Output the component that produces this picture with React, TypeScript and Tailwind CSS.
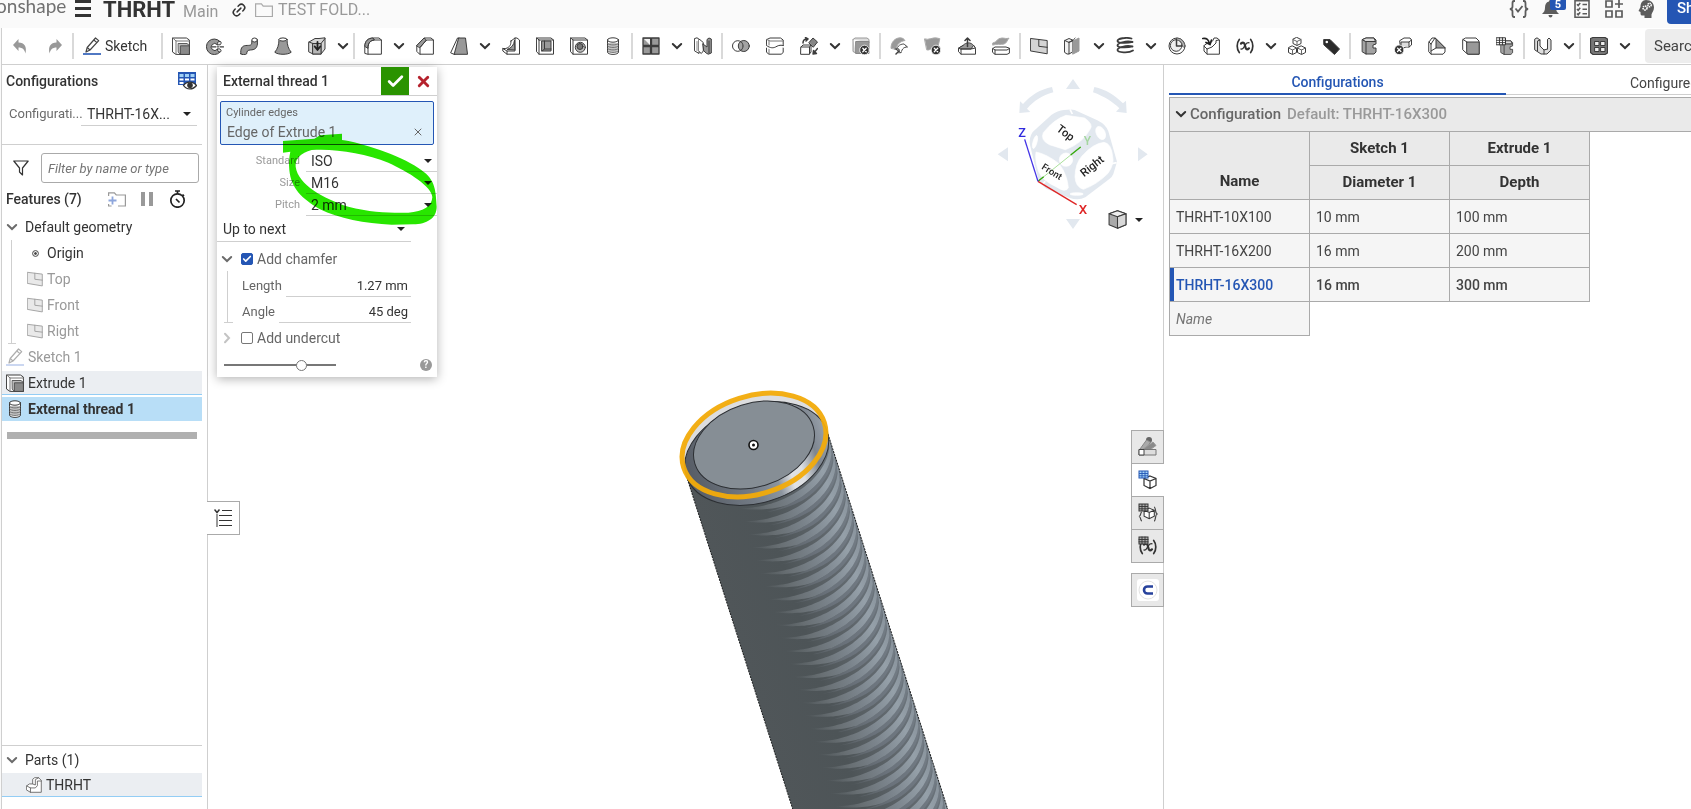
import React, { ReactNode } from "react";
import { Check, X, Link2 } from "lucide-react";

const LINE = "#3c3c3c";
const GREY = "#999999";

function Glyph({ children, size = 18, fill = "white" }: { children: ReactNode; size?: number; fill?: string }) {
  return (
    <svg width={size} height={size} viewBox="0 0 18 18" fill={fill} stroke={LINE} strokeWidth="1" strokeLinejoin="round" strokeLinecap="round" className="shrink-0" aria-hidden="true">
      {children}
    </svg>
  );
}

const plane = (
  <>
    <path d="M.8 1.500l16.400 2v13.300L.8 14z" fill="#d4d4d4" />
    <path d="M8.800 2.500v6.800l8.400 1" fill="none" />
  </>
);
const extrude = (
  <>
    <path d="M.8 1h13.600l3 2v14.400H4L.8 15.200z" />
    <path d="M.8 1L4 4h13.400M4 4v13.400" fill="none" stroke="#777" />
    <path d="M6.500 6.500h8.500l2.400 2v8.900H8.500l-2-2z" fill="#bdbdbd" strokeWidth=".8" />
    <path d="M8.800 8.800h8.600v8.600H8.800z" fill="#8a8a8a" strokeWidth=".8" />
  </>
);
const thread = (
  <>
    <path d="M3.500 3v12c0 1.400 2.500 2.400 5.500 2.400s5.500-1 5.500-2.400V3z" />
    <path d="M4 6v8c2 2 8 2 10 0V6z" fill="#c4c4c4" stroke="none" />
    <ellipse cx="9" cy="3" rx="5.500" ry="2.200" />
    <path d="M3.500 6.500c2 2 9 2 11 0M3.500 9c2 2 9 2 11 0M3.500 11.500c2 2 9 2 11 0M3.500 14c2 2 9 2 11 0" fill="none" stroke="#666" strokeWidth=".9" />
  </>
);
const badX = (cx: number, cy: number) => (
  <>
    <circle cx={cx} cy={cy} r="4.800" fill="#333" stroke="white" strokeWidth=".8" />
    <path d={`M${cx - 1.700} ${cy - 1.700}l3.400 3.400m0-3.400l-3.400 3.400`} stroke="white" strokeWidth="1.300" />
  </>
);
const clamp = (
  <>
    <path d="M2.500 2.500L6 1h8l2 2v4l-3 1v3h3v4l-2 2H6l-3.500-2z" fill="#a3a3a3" />
    <path d="M2.500 2.500L6 4.500h9.500M6 4.500V17" fill="none" />
    <path d="M2.500 2.500L6 1h8l1.500 3.500H6z" fill="#ddd" />
  </>
);
const miniGrid = (x: number, y: number, color: string, bg: string) => (
  <>
    <rect x={x} y={y} width="9" height="7" fill={bg} stroke={color} strokeWidth="1" />
    <path d={`M${x + 3} ${y}v7m3-7v7M${x} ${y + 2.500}h9m-9 2.300h9`} stroke={color} strokeWidth=".9" fill="none" />
  </>
);
const variable = (
  <>
    <path d="M3.300 2.500C.5 6 .5 12 3.300 15.500M14.700 2.500c2.800 3.500 2.800 9.500 0 13" fill="none" stroke="#333" strokeWidth="1.700" />
    <path d="M5 6.500c2-1.500 3.200-.8 3.700 1l1 3.500c.5 1.800 1.800 2 3.300.3" fill="none" stroke="#333" strokeWidth="2.200" />
    <path d="M13 5.800c-1.800-.6-3 .8-4 2.700S6.800 12.500 5 12" fill="none" stroke="#333" strokeWidth="1.300" />
  </>
);

const icons: Record<string, ReactNode> = {
  extrude,
  plane,
  thread,
  variable,
  revolve: (
    <>
      <path d="M14 4.500A7.800 7.800 0 1 0 14 15l-2.600-2.800a3.500 3.500 0 1 1-.2-4.700z" fill={GREY} />
      <path d="M11.200 7.500c0-2 1-3.500 2.800-3 1.500 0 1.500 2 .5 3zM11.400 12.200c0 1.600 1 3 2.600 2.800 1.400-.2 1.500-2 .3-2.800z" fill="#e4e4e4" />
      <path d="M6 9.800h4m1.500 0h1m1.500 0h3.500" strokeWidth="1.200" />
    </>
  ),
  sweep: (
    <>
      <path d="M.8 16.800c-.5-5 1-8 5-8.300 4-.2 5.500.2 6-2.500V3.500h5.600V7c-.4 4.500-3 5.800-7 6-2.500.1-3.600 1-3.700 3.800-1.500 1.200-4.500 1.200-5.900 0z" fill={GREY} />
      <ellipse cx="14.600" cy="3" rx="2.800" ry="2" />
    </>
  ),
  loft: (
    <>
      <path d="M5 2.500C5 8 3.500 12 .8 15.200c3 2.800 13.400 2.800 16.400 0C14.500 12 13 8 13 2.500z" fill={GREY} />
      <ellipse cx="9" cy="2.500" rx="4" ry="1.600" />
    </>
  ),
  thicken: (
    <>
      <path d="M1 5l6-3.500h4l6-.7V12l-4 5H5l-4-2z" fill="#d6d6d6" />
      <path d="M1 5l4 1.500h8l4-5M5 6.500V17M13 6.500V17" fill="none" />
      <path d="M5 6.500h8V17H5z" fill="#b6b6b6" />
      <path d="M9.500 5v7m-2.800-2.500L9.500 13l2.800-3.500" strokeWidth="1.800" fill="none" stroke="#222" />
    </>
  ),
  fillet: (
    <>
      <path d="M.8 16V9C1 4 4 1.200 9 1h6l2.400 2v14.200H4z" />
      <path d="M.8 9C1 4 4 1.200 9 1l1.500 2C6 3.500 4 6 4 11z" fill={GREY} />
      <path d="M4 17.200V11c0-5 2.500-7.700 6.500-8h7" fill="none" />
    </>
  ),
  chamfer: (
    <>
      <path d="M.8 14V8.500L8 1h7l2.400 2v14.200H4z" />
      <path d="M.8 8.500L8 1l2.500 2L4 10.500z" fill={GREY} />
      <path d="M4 17.200v-6.700L10.500 3h7" fill="none" />
    </>
  ),
  draft: (
    <>
      <path d="M.8 15.500L7.500 1h2L5 17.300z" />
      <path d="M9 1h6.500l2 16.300H4.500z" fill={GREY} />
    </>
  ),
  rib: (
    <>
      <path d="M9 4l4-3h2l2.500 2v14.200H5L.8 14v-2.500h3C8 10 9 8 9 4z" />
      <path d="M12.500 3.500C12 8 9.500 11 5 12.500l7.500.5z" fill={GREY} />
      <path d="M13 1v13H5v3.200M.8 11.500L5 14" fill="none" />
    </>
  ),
  shell: (
    <>
      <path d="M.8 1H15l2.500 2v14.200H3L.8 15z" />
      <path d="M3 3h14.500M3 3v14.200M.8 1L3 3" fill="none" />
      <path d="M6 4h9v10H6z" fill={GREY} />
      <path d="M6 14l2.500-2H15M8.500 12V4" fill="none" />
    </>
  ),
  hole: (
    <>
      <path d="M.8 1H15l2.500 2v14.200H3L.8 15z" />
      <path d="M.8 1L3 3h14.500M3 3v14.200" fill="none" />
      <circle cx="10.300" cy="10.300" r="5" fill="#bbb" />
      <circle cx="10" cy="9.500" r="3" fill="#777" />
    </>
  ),
  pattern: (
    <>
      <path d="M1 1h7.500v7.500H1zM9.500 1H17v7.500H9.500zM1 9.500h7.500V17H1zM9.500 9.500H17V17H9.500z" fill={GREY} strokeWidth="1.300" />
      <path d="M2 2h6v6z" fill="#f1f1f1" stroke="none" />
    </>
  ),
  mirror: (
    <>
      <path d="M.8 1.500L3 .8l4.500 3 1.800 2V14l-2 2.500L5 14.500v2L.8 14z" />
      <path d="M9 7l4 3V2.500l2-1.500 2.300 1v14l-3 1.200-2-1L10 14z" fill={GREY} />
      <path d="M4.500 2v12M3 4.500v9" fill="none" stroke="#888" />
      <path d="M15 4v12" stroke="#333" />
    </>
  ),
  boolean: (
    <>
      <circle cx="5.800" cy="9" r="5.300" />
      <circle cx="11.800" cy="9" r="5.500" fill={GREY} fillOpacity=".9" />
      <path d="M8.800 4.500a5.400 5.400 0 0 1 0 9" fill="none" />
    </>
  ),
  split: (
    <>
      <path d="M.8 2.500L4 1h10.500l2.700 2v12.500l-2 1.700H3L.8 15.500z" />
      <path d="M.8 2.500L4 4h13M3 4v4m0 3v6" fill="none" stroke="#777" />
      <path d="M0 9c4 3 7 2.500 9 1.500s5-2.500 9-1" fill="none" stroke="white" strokeWidth="2.600" />
      <path d="M.5 8.500c4 3 7 2.500 9 1.500s4-2.500 8-1.500" fill="none" />
    </>
  ),
  transform: (
    <>
      <path d="M1 10l2-2h8l-1.500 2v7.300H1z" />
      <path d="M1 10h8.500M9.500 17l1.500-2V8" fill="none" />
      <path d="M9 5.500L13 1l4.500 4-4 5z" fill="#858585" />
      <path d="M3 6c0-3 1.500-4 4-4M5.500.5L8 2 6 4" fill="none" strokeWidth="1.500" />
      <path d="M17.500 11.500l-4 5m0-3l-.5 3.500 3.500-.5z" fill="#222" strokeWidth="1.400" />
    </>
  ),
  deletePart: (
    <>
      <path d="M1 2.500L3 1h12l2 1.500v3M1 2.500v12L4 16" fill="#ddd" stroke="#999" />
      <path d="M4 4.500h13v12H4z" fill={GREY} stroke="#888" />
      {badX(12.500, 13)}
    </>
  ),
  modifyFillet: (
    <>
      <path d="M1 11C1 5 5 1 10 .8c2.500 0 4 1.200 5 2.700C9.500 4.500 7 7.500 6 12z" fill={GREY} stroke="#aaa" />
      <path d="M6.500 13c1-4 3.500-6 7.500-6l3.500 3c-4 0-5.500 2-6.500 6z" strokeDasharray="2 1" />
      <path d="M6 17l3-3" strokeWidth="1.500" />
      <path d="M5 12h4v4" fill="none" />
    </>
  ),
  deleteFace: (
    <>
      <path d="M.8 2c4 1.500 8-2 12-1l3 .7-2 9C9 10 5 14 3 13z" fill={GREY} stroke="#aaa" />
      {badX(12, 13)}
    </>
  ),
  moveFace: (
    <>
      <path d="M.8 11L5 8.500h11l1.500 3v5.700H3L.8 15z" />
      <path d="M.8 11L5 8.500C8 5 13 5 15.500 8.500L13 12H3z" fill={GREY} />
      <path d="M3 12h10l4.500-1M3 12v5" fill="none" />
      <path d="M9.500 9.500V1M7 3.500L9.500 1 12 3.500" fill="none" strokeWidth="1.500" />
    </>
  ),
  replaceFace: (
    <>
      <path d="M1 6c4-.5 4-5 9-5 2.500 0 4 1 7 .2C15 3 15 6 12 7S4 6.500 1 8z" fill={GREY} stroke="#aaa" />
      <path d="M.8 11.500L3 10h11l3.400 1.200v5L15 17.300H3L.8 15.500z" />
      <path d="M.8 11.500L3 13h12l2.400-1.500M3 13v4" fill="none" />
    </>
  ),
  surface: (
    <>
      <path d="M.8 3.500L5 1.500 8.500 3v12L5 17H3L.8 15.500z" fill="#f2f2f2" />
      <path d="M5 5.500v11.300M.8 3.500L5 5.500 8.500 3" fill="none" />
      <path d="M9 4l6-3v13l-6 3z" fill={GREY} stroke="#999" />
      <path d="M5 5c4 0 4-2 6-4" fill="none" />
    </>
  ),
  helix: (
    <path d="M15.500 1.500C10 0 1.500 1.500 1.500 4s11 2 15 1M16.500 5C10 3.500 1.500 6 1.500 8.500s11 2 15 1M16.500 9.500C10 8 1.500 10.500 1.500 13s11 3.500 15.500.5" fill="none" strokeWidth="1.800" />
  ),
  mate: (
    <>
      <circle cx="9" cy="9" r="8" />
      <circle cx="8.200" cy="8.500" r="5.800" fill="#eee" />
      <path d="M8.500 2.500V9H14" fill="none" strokeWidth="1.500" />
      <path d="M9 1a8 8 0 0 1 7.500 10l-2-2A6 6 0 0 0 9 2.800z" fill="#bbb" strokeWidth=".6" />
    </>
  ),
  derive: (
    <>
      <path d="M6 6c3 0 5-1.500 6-5h3l2.400 2v14.200H5L2 14V9z" />
      <path d="M5 17V12l5-2 4-4V3.500l3-.5M2 9l3 3" fill="none" />
      <path d="M.8 1.500c4-.5 6 1 6.500 5M4 5.500l4 2L9.500 3" fill="none" stroke="#222" strokeWidth="1.700" />
    </>
  ),
  composite: (
    <>
      <path d="M9 .5l4 2v4l-4 2-4-2v-4zM4.500 9l4 2v4.500l-4 2-4-2V11zM13.500 9l4 2v4.500l-4 2-4-2V11z" />
      <path d="M5 2.500l4 2 4-2M9 4.500v4M.5 11l4 2 4-2M4.500 13v4.500M9.500 11l4 2 4-2M13.500 13v4.500" fill="none" stroke="#666" />
    </>
  ),
  tag: (
    <>
      <path d="M2 2.500h6L17.500 12l-5 5.500L2 8z" fill="#2b2b2b" />
      <circle cx="4.800" cy="5" r="1.300" stroke="none" />
    </>
  ),
  clamp,
  sheetDelete: (
    <>
      <path d="M6 3.500L10 1h6l1.500 2v5L15 10h-3L7 12z" />
      <path d="M7 9V5h8v5M15 5l2.500-2" fill="#ddd" />
      {badX(5.200, 12.800)}
    </>
  ),
  flange: (
    <>
      <path d="M1 5l3-4h3l10 10v4l-2 2.200H3L1 15z" />
      <path d="M8 2v9h9z" fill="#999" />
      <path d="M3 7v10M3 7l4-6M8 11l-5 3M1 5l2 2" fill="none" />
    </>
  ),
  cube: (
    <>
      <path d="M1 2.500L3.500 1H14l3 3v13.200H5.500L1 13z" />
      <path d="M5 5h12.200v12.200H6.500L5 16z" fill={GREY} />
      <path d="M1 2.500L5 5" fill="none" />
    </>
  ),
  sheetTable: (
    <>
      <g transform="translate(3 3) scale(.85)">{clamp}</g>
      {miniGrid(0.500, 0.800, "#333", "white")}
    </>
  ),
  frame: (
    <>
      <path d="M1 2l2-1.200L6 3v6l4 4 3.500-1V2.500L15 1l2 2v10l-4 4H7l-6-4z" fill="#ddd" />
      <path d="M6 3L3.500 4v10M10 13v4M13.500 3v9" fill="none" />
    </>
  ),
  windowGrid: (
    <>
      <path d="M.5 1.500L3 .5h12l2.500 1.500v14L15 17.500H3L.5 15.500z" fill="#777" strokeWidth="1.200" />
      <path d="M5 4.500h4v4H5zM11 4.500h4v4h-4zM5 10.500h4v4H5zM11 10.500h4v4h-4z" fill="#eee" />
    </>
  ),
};

function Chevron({ light = false }: { light?: boolean }) {
  return (
    <svg width="12" height="8" viewBox="0 0 12 8" fill="none" stroke={light ? "#6b6b6b" : "#333"} strokeWidth="2" strokeLinecap="round" className="shrink-0" aria-hidden="true">
      <path d="M1.800 2L6 6l4.200-4" />
    </svg>
  );
}

function Caret() {
  return <span aria-hidden="true" className="pointer-events-none size-0 border-x-4 border-t-4 border-x-transparent border-t-[#222]" />;
}

const tools = "| extrude revolve sweep loft thicken v | fillet v chamfer draft v rib shell hole thread | pattern v mirror | boolean split transform v deletePart | modifyFillet deleteFace moveFace replaceFace | plane surface v helix v mate derive variable v composite tag | clamp sheetDelete flange cube sheetTable | frame v | windowGrid v".split(" ");

function Tools() {
  return (
    <div className="flex h-full shrink-0 items-center">
      {tools.map((name, i) => {
        if (name === "|") return <span key={i} className="mx-px h-[26px] w-[2px] shrink-0 bg-[#d9d9d9]" />;
        if (name === "v")
          return (
            <button key={i} aria-label="More tools" className="flex h-7 w-[18px] items-center justify-center">
              <Chevron />
            </button>
          );
        return (
          <button key={i} aria-label={name} className="flex h-7 w-[34px] items-center justify-center">
            <Glyph>{icons[name]}</Glyph>
          </button>
        );
      })}
    </div>
  );
}

function PencilIcon({ faded = false }: { faded?: boolean }) {
  return (
    <svg width="18" height="18" viewBox="0 0 18 18" fill="white" stroke={faded ? "#999" : "#444"} strokeWidth="1.200" strokeLinejoin="round" aria-hidden="true">
      <path d="M3 15l1.200-4.500L12.500 1l3.200 2.600L7 13z" />
      <path d="M4.200 10.500L7 13M10.800 3l3.200 2.600" />
      <path d="M0 17h18" stroke={faded ? "#aec2ea" : "#2456b4"} strokeWidth="1.600" />
    </svg>
  );
}

function Header() {
  return (
    <header className="flex h-7 shrink-0 items-start justify-between overflow-hidden bg-[#fafafa] text-[#333]">
      <div className="flex h-5 shrink-0 items-center">
        <span className="-ml-1 w-[66px] pb-2 font-[Lato,sans-serif] text-[19px] leading-5 text-[#707070]">onshape</span>
        <button aria-label="Main menu" className="ml-[13px] flex w-4 flex-col gap-1 pb-1">
          <span className="h-[3px] bg-[#333]" />
          <span className="h-[3px] bg-[#333]" />
          <span className="h-[3px] bg-[#333]" />
        </button>
        <h1 className="ml-3 w-20 text-[22px] leading-5 font-bold">THRHT</h1>
        <span className="w-12 pt-1 text-base leading-4 text-[#999]">Main</span>
        <Link2 size={16} strokeWidth={2.200} className="-rotate-45" />
        <svg width="18" height="15" viewBox="0 0 18 15" fill="none" stroke="#aaa" strokeWidth="1.200" className="ml-2" aria-hidden="true">
          <path d="M.6 13.500V.8h5.800l1.800 2.400h9.200v10.300z" />
        </svg>
        <a href="#folder" className="ml-[5px] text-base leading-4 text-[#999]">TEST FOLD...</a>
      </div>
      <div className="flex w-[182px] shrink-0 items-start overflow-hidden text-[#5c5c5c]">
        <button aria-label="Checks" className="mr-[13px] h-[18px] w-5">
          <svg width="20" height="18" viewBox="0 0 20 18" fill="none" stroke="#5c5c5c" strokeWidth="1.800">
            <path d="M6 1H5C3.500 1 3.500 2.500 3.500 3.500v3C3.500 8 2.500 9 .8 9c1.700 0 2.700 1 2.700 2.500v3c0 1 0 2.500 1.500 2.500h1M14 1h1c1.500 0 1.500 1.500 1.500 2.500v3c0 1.500 1 2.500 2.700 2.500-1.700 0-2.700 1-2.700 2.500v3c0 1 0 2.500-1.500 2.500h-1M6.500 8.500L9 11.500 13.500 6" />
          </svg>
        </button>
        <button aria-label="Notifications, 5 new" className="relative mr-[15px] h-[18px] w-[17px]">
          <svg width="17" height="18" viewBox="0 0 17 18" fill="#5c5c5c">
            <path d="M8.500 0c1 0 1.500.7 1.500 1.500 3 .8 4 3 4 6 0 3 .8 4.500 3 6.500H0c2.200-2 3-3.500 3-6.500 0-3 1-5.200 4-6C7 .7 7.500 0 8.500 0zM6.500 15h4c0 1.700-1 2.500-2 2.500s-2-.8-2-2.500z" />
          </svg>
          <span className="absolute top-0 left-2 flex h-[10px] w-4 items-center justify-center rounded-b-[2px] bg-[#2456b4] text-[11px] leading-[10px] font-bold text-white">5</span>
        </button>
        <button aria-label="Tasks" className="mr-[15px] h-[18px] w-4">
          <svg width="16" height="18" viewBox="0 0 16 18" fill="none" stroke="#5c5c5c" strokeWidth="1.600">
            <path d="M1 .8h14v16.400H1zM8.500 4.500H13M8.500 9.200H13M8.500 13.800H13M3 4.200l1.200 1.300 2-2.500M3 9l1.200 1.300 2-2.500M3 13.500l1.200 1.300 2-2.500" />
          </svg>
        </button>
        <button aria-label="Apps" className="mr-[15px] h-[18px] w-[18px]">
          <svg width="18" height="18" viewBox="0 0 18 18" fill="none" stroke="#5c5c5c" strokeWidth="1.700">
            <path d="M1 1h6v6H1zM1 11h6v6H1zM11 11h6v6h-6zM14 0v8M10 4h8" />
          </svg>
        </button>
        <button aria-label="Learning center" className="mr-3 h-[18px] w-[17px]">
          <svg width="17" height="18" viewBox="0 0 17 18" fill="#5c5c5c">
            <path d="M8 0c5 0 8 3 8 7.500 0 3.500-2 5-2.500 7L13.500 18H6.500v-2.500H4c-1.500 0-1.500-1.500-1.500-3.500L.5 11l2-4C2.500 3 4.500 0 8 0z" />
            <circle cx="7" cy="8" r="2" fill="none" stroke="white" strokeWidth="1.600" strokeDasharray="1.500 .6" />
            <circle cx="11.500" cy="5" r="1.700" fill="none" stroke="white" strokeWidth="1.500" strokeDasharray="1.300 .5" />
          </svg>
        </button>
        <button className="h-6 shrink-0 rounded-bl-[4px] bg-[#2456b4] px-[10px] pb-2 text-[15px] leading-4 font-medium text-white">Share</button>
      </div>
    </header>
  );
}

function Toolbar() {
  return (
    <div role="toolbar" aria-label="Feature tools" className="flex h-[37px] shrink-0 items-center overflow-hidden border-b border-[#cfcfcf] bg-white">
      <button aria-label="Undo" className="flex w-[35px] shrink-0 justify-center">
        <svg width="14" height="15" viewBox="0 0 14 15" fill="#999"><path d="M5.500 0v3.500c6 0 8.500 4 7 11-1-4-3-6-7-6V12L0 6z" /></svg>
      </button>
      <button aria-label="Redo" className="flex w-[35px] shrink-0 justify-center">
        <svg width="14" height="15" viewBox="0 0 14 15" fill="#999"><path d="M8.500 0v3.500c-6 0-8.500 4-7 11 1-4 3-6 7-6V12L14 6z" /></svg>
      </button>
      <span className="h-[26px] w-[2px] shrink-0 bg-[#d9d9d9]" />
      <button className="flex w-[86px] shrink-0 items-center gap-1 pl-[9px] text-[14px] text-[#333]">
        <PencilIcon />
        Sketch
      </button>
      <Tools />
      <input aria-label="Search tools" placeholder="Search tools..." className="ml-[11px] h-[34px] w-40 shrink-0 rounded-[4px] bg-[#ededed] px-[9px] text-[15px] text-[#333] placeholder:text-[#444]" />
    </div>
  );
}

function FeaturePanel() {
  const planes = ["Top", "Front", "Right"];
  return (
    <aside className="flex w-[206px] shrink-0 flex-col border-r border-[#cfcfcf] bg-white text-sm text-[#333]">
      <div className="mr-[5px] flex h-20 flex-col border-b border-[#cfcfcf] pt-1 pr-[5px] pl-1">
        <div className="flex h-6 items-center justify-between">
          <h2 className="font-medium">Configurations</h2>
          <button aria-label="Show configuration table">
            <svg width="19" height="19" viewBox="0 0 19 19" fill="none" aria-hidden="true">
              <path d="M0 0h18v13H0z" fill="#2456b4" />
              <path d="M1.500 2h4v3h-4zM7 2h4v3H7zM12.500 2h4v3h-4z" fill="#9fd0f5" />
              <path d="M1.500 6.500h4v2h-4zM7 6.500h4v2H7zM12.500 6.500h4v2h-4zM1.500 10h4v2h-4z" fill="white" />
              <path d="M5.500 13.500c3-4.500 9.500-4.500 13 0-3.500 4.500-10 4.500-13 0z" fill="white" stroke="#333" strokeWidth="1.300" />
              <circle cx="12" cy="13.300" r="2.800" fill="#333" />
            </svg>
          </button>
        </div>
        <div className="mt-[9px] flex items-center">
          <label htmlFor="cfg" className="w-[75px] pl-[3px] text-[13px] text-[#6b6b6b]">Configurati...</label>
          <div className="relative flex h-6 flex-1 items-center border-b border-[#cfcfcf]">
            <select id="cfg" className="w-full appearance-none bg-transparent pl-[6px] text-sm leading-5">
              <option>THRHT-16X...</option>
            </select>
            <span className="absolute right-[6px] flex"><Caret /></span>
          </div>
        </div>
      </div>
      <div className="flex h-[43px] items-center pt-[3px] pr-2 pl-[11px]">
        <svg width="16" height="16" viewBox="0 0 16 16" fill="none" stroke="#333" strokeWidth="1.200" strokeLinejoin="round" aria-hidden="true"><path d="M.8 1h14.400L9.500 8v7L6.500 12V8z" /></svg>
        <input aria-label="Filter features" placeholder="Filter by name or type" className="ml-3 h-[30px] min-w-0 flex-1 rounded-[3px] border border-[#aaa] px-[6px] text-[13px] italic placeholder:text-[#757575]" />
      </div>
      <div className="flex h-[22px] items-center pl-1">
        <h2 className="w-[102px] font-medium">Features (7)</h2>
        <button aria-label="New folder" className="w-[33px]">
          <svg width="18" height="15" viewBox="0 0 18 15" fill="none" stroke="#999" strokeWidth="1.200"><path d="M.6 4V.8h5.800l1.800 2.200h9.200v11H10M.6 12v2h3" /><path d="M4.500 4.500v8M.5 8.500h8" stroke="#8ea6dc" strokeWidth="1.800" /></svg>
        </button>
        <button aria-label="Pause regeneration" className="flex w-7 gap-1"><span className="h-[14px] w-1 bg-[#999]" /><span className="h-[14px] w-1 bg-[#999]" /></button>
        <button aria-label="Rebuild times">
          <svg width="17" height="18" viewBox="0 0 17 18" fill="none" stroke="#222" strokeWidth="1.700"><circle cx="8.500" cy="10.500" r="6.700" /><path d="M6 1h5M8.500 1v3M13.500 4.500l1.500 1.500M7 9l3.500 3.500" /></svg>
        </button>
      </div>
      <ul className="mt-1">
        <li>
          <button className="flex h-[26px] w-full items-center gap-[7px] pl-1"><Chevron light />Default geometry</button>
          <ul className="relative ml-[9px] border-l border-[#cfcfcf]">
            <li className="flex h-[26px] items-center gap-2 pl-5 text-[#333]">
              <svg width="7" height="7" viewBox="0 0 7 7" fill="none" stroke="#444" aria-hidden="true"><circle cx="3.500" cy="3.500" r="2.900" /><circle cx="3.500" cy="3.500" r="1" fill="#444" /></svg>
              Origin
            </li>
            {planes.map((p) => (
              <li key={p} className="flex h-[26px] items-center gap-1 pl-[15px] text-[#999]">
                <span className="opacity-50"><Glyph size={16}>{plane}</Glyph></span>
                {p}
              </li>
            ))}
            <li aria-hidden="true" className="absolute bottom-0 -left-1 h-px w-2 bg-[#cfcfcf]" />
          </ul>
        </li>
        <li className="flex h-[26px] items-center gap-1 pl-1 text-[#999]"><span className="opacity-80"><PencilIcon faded /></span>Sketch 1</li>
        <li className="mr-[5px] mt-px flex h-6 items-center gap-1 border-b border-[#93cdf5] bg-[#ebeef2] pl-1"><Glyph>{extrude}</Glyph>Extrude 1</li>
        <li className="mr-[5px] mt-[2px] flex h-6 items-center gap-1 bg-[#b8def7] pl-1 font-bold"><Glyph>{thread}</Glyph>External thread 1</li>
      </ul>
      <div className="mt-[11px] mr-[10px] ml-[5px] h-[7px] bg-[#b0b0b0]" />
      <div className="mt-auto mr-[5px] h-16 border-t border-[#cfcfcf]">
        <button className="flex h-[27px] w-full items-center gap-[7px] pl-1"><Chevron light />Parts (1)</button>
        <div className="flex h-6 items-center gap-1 border-b border-[#93cdf5] bg-[#ebeef2] pl-6">
          <Glyph size={16}><path d="M.8 10l3-2.200h3.700V2.500L9.700.8h4.500l3 3v13.400H5l-4.200-2.500z" stroke="#666" /><path d="M.8 10L5 12.300h5.500l2.300-2.500V4.500h4.400M5 12.300v5M7.500 7.800l3 1.200V3l3.700-2.200" fill="none" stroke="#666" /></Glyph>
          THRHT
        </div>
      </div>
    </aside>
  );
}

function PropertyRow({ id, label, value }: { id: string; label: string; value: string }) {
  return (
    <div className="flex h-[22px]">
      <label htmlFor={id} className="w-[83px] pt-[3px] text-right text-[11px] leading-4 text-[#999]">{label}</label>
      <div className="relative ml-[6px] flex flex-1 items-center border-b border-[#cfcfcf]">
        <select id={id} className="w-full appearance-none bg-transparent pl-[5px] text-sm leading-5"><option>{value}</option></select>
        <span className="absolute right-[5px] flex"><Caret /></span>
      </div>
    </div>
  );
}

function ThreadDialog() {
  return (
    <section aria-label="External thread" className="absolute top-[2px] left-[9px] w-[220px] bg-white text-sm text-[#333] shadow-[0_2px_10px_rgba(0,0,0,0.3)]">
      <div className="flex h-[29px] items-center border-b border-[#cfcfcf]">
        <h2 className="flex-1 pl-[6px] font-medium">External thread 1</h2>
        <button aria-label="Accept" className="flex h-full w-7 items-center justify-center bg-[#2a9300] text-white"><Check size={19} strokeWidth={3.500} /></button>
        <button aria-label="Cancel" className="flex h-full w-7 items-center justify-center text-[#b5222d]"><X size={17} strokeWidth={4} /></button>
      </div>
      <div className="mx-[3px] mt-[5px] h-11 rounded-[2px] border border-[#2456b4] bg-[#dff0fb] pr-[9px] pl-[5px] text-[#666]">
        <div className="pt-[2px] text-[11px] leading-[18px]">Cylinder edges</div>
        <div className="flex items-center justify-between pl-px leading-5">Edge of Extrude 1<button aria-label="Remove edge"><X size={12} /></button></div>
      </div>
      <div className="mt-[5px]">
        <PropertyRow id="standard" label="Standard" value="ISO" />
        <PropertyRow id="size" label="Size" value="M16" />
        <PropertyRow id="pitch" label="Pitch" value="2 mm" />
      </div>
      <div className="relative mr-[26px] flex h-[26px] items-center border-b border-[#cfcfcf]">
        <select aria-label="End type" className="w-full appearance-none bg-transparent pl-[6px] text-sm leading-5"><option>Up to next</option></select>
        <span className="absolute right-[6px] flex"><Caret /></span>
      </div>
      <div className="flex h-[29px] items-center pt-1 pl-1 text-[#666]">
        <Chevron light />
        <label className="ml-2 flex items-center gap-1">
          <input type="checkbox" defaultChecked className="peer sr-only" />
          <span className="flex size-3 items-center justify-center rounded-[2px] border border-[#2456b4] bg-[#2456b4] text-white"><Check size={10} strokeWidth={4} /></span>
          Add chamfer
        </label>
      </div>
      <div className="relative mr-[26px] ml-[10px] border-l border-[#cfcfcf] pl-[14px] text-[#666]">
        {[["Length", "1.27 mm"], ["Angle", "45 deg"]].map(([label, value]) => (
          <div key={label} className="flex h-[26px] items-end gap-1">
            <label htmlFor={label} className="pb-[3px] text-[13px] leading-4">{label}</label>
            <input id={label} defaultValue={value} className="h-[22px] min-w-0 flex-1 border-b border-[#cfcfcf] pr-[3px] text-right text-[13px] text-[#333]" />
          </div>
        ))}
        <span aria-hidden="true" className="absolute bottom-0 -left-1 h-px w-[9px] bg-[#cfcfcf]" />
      </div>
      <div className="flex h-[30px] items-center pl-1 text-[#666]">
        <span className="-rotate-90 opacity-40"><Chevron light /></span>
        <label className="ml-2 flex items-center gap-1">
          <input type="checkbox" className="size-3 appearance-none rounded-[2px] border border-[#777] bg-white" />
          Add undercut
        </label>
      </div>
      <div className="flex h-6 items-center justify-between pr-[5px] pl-[7px]">
        <input type="range" aria-label="Preview opacity" defaultValue={71} className="h-[2px] w-28 appearance-none bg-[#777] [&::-webkit-slider-thumb]:size-[11px] [&::-webkit-slider-thumb]:appearance-none [&::-webkit-slider-thumb]:rounded-full [&::-webkit-slider-thumb]:border [&::-webkit-slider-thumb]:border-[#777] [&::-webkit-slider-thumb]:bg-white" />
        <button aria-label="Help" className="flex size-3 items-center justify-center rounded-full bg-[#999] text-[10px] leading-none font-bold text-white">?</button>
      </div>
      <svg viewBox="36 21 660 927" className="pointer-events-none absolute top-0 left-0 h-[309px] w-[220px] overflow-visible mix-blend-multiply" aria-hidden="true">
        <path
          fillRule="evenodd"
          fill="#28e600"
          d="M234 243L328 236L345 226L411 221V240C465 247 585 285 640 324C690 355 692 385 695 440C695 475 665 492 625 493L560 494C480 491 400 475 345 448C290 415 258 385 253 330C251 310 252 292 256 275L234 278ZM320 270C287 280 270 295 272 320C280 375 355 415 430 440C500 458 560 459 610 458C655 455 680 440 682 412C682 380 610 335 550 308C480 280 390 265 320 270Z"
        />
      </svg>
    </section>
  );
}

const A = 73.800;
const B = 49;

function arcBand(start: number, offset: number, thickness: number) {
  const us = Array.from({ length: 41 }, (_, i) => start + ((A - start) * i) / 40);
  const low = (u: number) => B * Math.sqrt(Math.max(0, 1 - (u / A) ** 2));
  const top = us.map((u) => `${u.toFixed(1)} ${(offset + low(u)).toFixed(1)}`);
  const bottom = [...us].reverse().map((u) => {
    const t = Math.min(1, (u - start) / 45);
    return `${u.toFixed(1)} ${(offset + low(u) + thickness * t).toFixed(1)}`;
  });
  return `M${top.join("L")}L${bottom.join("L")}Z`;
}

function Rod() {
  const turns = Array.from({ length: 36 }, (_, i) => 12 + i * 13.600);
  return (
    <svg viewBox="208 65 955 744" preserveAspectRatio="xMidYMid slice" className="absolute inset-0 size-full" role="img" aria-label="Threaded rod">
      <defs>
        <linearGradient id="body" gradientUnits="userSpaceOnUse" x1={-A} y1="0" x2={A} y2="0">
          <stop offset="0" stopColor="#505659" />
          <stop offset=".45" stopColor="#4d5457" />
          <stop offset=".75" stopColor="#5e656a" />
          <stop offset="1" stopColor="#6c757d" />
        </linearGradient>
        <linearGradient id="crest" gradientUnits="userSpaceOnUse" x1={-34} y1="0" x2={A} y2="0">
          <stop offset="0" stopColor="#666d71" stopOpacity="0" />
          <stop offset=".25" stopColor="#676e72" />
          <stop offset=".55" stopColor="#7b848c" />
          <stop offset=".85" stopColor="#95a0a9" />
          <stop offset="1" stopColor="#88929b" />
        </linearGradient>
        <linearGradient id="flank" gradientUnits="userSpaceOnUse" x1={-20} y1="0" x2={A} y2="0">
          <stop offset="0" stopColor="#676e75" stopOpacity="0" />
          <stop offset=".5" stopColor="#6a727b" />
          <stop offset="1" stopColor="#737c85" />
        </linearGradient>
        <linearGradient id="bevel" gradientUnits="userSpaceOnUse" x1={-A} y1="0" x2={A} y2="0">
          <stop offset="0" stopColor="#555b64" />
          <stop offset=".4" stopColor="#747c86" />
          <stop offset=".58" stopColor="#8c959f" />
          <stop offset=".68" stopColor="#e0e2e5" />
          <stop offset=".76" stopColor="#dcdfe2" />
          <stop offset=".88" stopColor="#7d858f" />
          <stop offset="1" stopColor="#9aa3ac" />
        </linearGradient>
        <clipPath id="side"><path d={`M${-A} 9A${A} ${B} 0 0 0 ${A} 9V520H${-A}Z`} /></clipPath>
      </defs>
      <g transform="translate(754 445) rotate(-17.700)">
        <ellipse rx={A} ry={B} fill="#dcdddf" />
        <path d={`M${-A} 9V520H${A}V9Z`} fill="url(#body)" />
        <g clipPath="url(#side)">
          {turns.map((v) => (
            <g key={v}>
              <path d={arcBand(-10, v + 7, 4)} fill="url(#flank)" />
              <path d={arcBand(-34, v, 7)} fill="url(#crest)" />
            </g>
          ))}
        </g>
        <path d={`M${-A} 9V520M${A} 9V520`} stroke="#1d1f20" strokeWidth="1" strokeDasharray="2 1" />
        <ellipse cy="9" rx={A} ry={B} fill="url(#bevel)" stroke="#2c2f33" strokeWidth="1" />
        <ellipse rx="62" ry="41.700" fill="#868e95" stroke="#2c2f33" strokeWidth="1" />
        <ellipse rx={A} ry={B} fill="none" stroke="#f2ab0a" strokeWidth="5" strokeOpacity=".95" />
      </g>
      <circle cx="753.500" cy="445" r="4.500" fill="white" stroke="#111" strokeWidth="1.600" />
      <circle cx="753.500" cy="445" r="1.500" fill="#111" />
    </svg>
  );
}

function ViewCube() {
  return (
    <svg width="200" height="190" viewBox="0 0 600 570" className="absolute top-0 right-0 -mt-[5px] mr-[-17px]" role="img" aria-label="View cube">
      <g fill="#e2e8ef">
        <path d="M279 57l21 30h-42zM279 507l21-30h-42zM53 283l31-21v42zM503 283l-29-21v42z" />
        <path d="M216 81l4 16c-34 9-58 26-79 49l10 10-33 3 2-35 9 8c23-26 52-44 87-51zM343 81l-4 16c34 12 62 31 79 48l-10 10 32 4-2-37-9 8c-24-24-52-42-86-49z" />
        <path d="M252 150Q274 147 284 150L352 181Q378 194 385 214L411 305L400 342Q397 350 388 357L316 412Q296 422 269 414L200 387Q182 374 175 358L150 255Q146 234 158 216L214 165Q233 151 252 150Z" />
      </g>
      <g fill="white" stroke="white" strokeWidth="2">
        <path d="M190 218Q222 178 258 166L314 174Q342 194 330 208Q308 250 256 269L208 254Q180 240 190 218Z" />
        <path d="M168 276Q200 282 238 312Q262 345 265 383Q258 400 228 380Q188 362 176 335Q164 300 168 276Z" />
        <path d="M306 288Q340 250 372 247Q394 250 398 290Q404 310 384 340Q350 374 310 388Q286 380 285 350Q286 310 306 288Z" />
        <ellipse cx="362" cy="219" rx="13" ry="21" transform="rotate(-25 362 219)" />
        <ellipse cx="165" cy="246" rx="6" ry="20" transform="rotate(15 165 246)" />
        <ellipse cx="290" cy="402" rx="20" ry="4" />
        <circle cx="258" cy="299" r="20" />
        <path d="M270 148l7 14M390 312l20-4M188 372l8-8" strokeWidth="5" />
      </g>
      <g fill="none" strokeWidth="4">
        <path d="M174 364L302 261" stroke="#a9e09a" strokeWidth="3" />
        <path d="M174 364l17-14M272 285l30-24" stroke="#35a80f" />
        <path d="M174 364L290 434" stroke="#df2626" />
        <path d="M174 364L134 238" stroke="#4434e6" />
      </g>
      <g className="font-[Roboto,sans-serif]" textAnchor="middle">
        <text x="126" y="232" fontSize="38" fontWeight="500" fill="#2f2ade">Z</text>
        <text x="309" y="461" fontSize="40" fontWeight="500" fill="#df2626">X</text>
        <text x="322" y="254" fontSize="36" fontWeight="500" fill="#a5d6a0">Y</text>
        <g fill="#222" fontSize="34" fontWeight="500">
          <text transform="translate(250 228) rotate(37)">Top</text>
          <text transform="translate(343 327) rotate(-38)">Right</text>
          <text transform="translate(211 343) rotate(32)" fontSize="28">Front</text>
        </g>
      </g>
    </svg>
  );
}

const swatches = (
  <>
    <circle cx="11" cy="3" r="3" fill="#666" stroke="none" />
    <path d="M2 12L8.500 3l4 2-5 8z" fill="#aaa" stroke="#888" />
    <path d="M4 13L15 5l3 3.500L9 15z" fill="#8a8a8a" stroke="#999" />
    <path d="M1 12.500h17V18H1z" fill="#ddd" stroke="#777" />
    <path d="M1 12.500h5V18H1z" />
  </>
);
const box = <path d="M12 6l6 2.500v7L12 18.500 6 15.500v-7zM6 8.500l6 2.500 6-2.500M12 11v7.500" fill="white" stroke="#333" />;

function SideTabs() {
  const tab = "flex h-[34px] w-[33px] items-center justify-center border border-[#aaa] bg-[#e8e8e8]";
  return (
    <div className="absolute top-[365px] -right-px flex flex-col">
      <button aria-label="Appearances" className={tab}><svg width="20" height="20" viewBox="0 0 20 20" fill="white" stroke="#444">{swatches}</svg></button>
      <button aria-label="Configurations" className="-mt-px flex h-[34px] w-[33px] items-center justify-center border-y border-l border-[#aaa] bg-white">
        <svg width="20" height="20" viewBox="0 0 20 20" strokeWidth="1.200">{box}{miniGrid(1, 1, "#2456b4", "#a9d6f7")}</svg>
      </button>
      <button aria-label="Custom tables" className={`${tab} -mt-px`}>
        <svg width="20" height="20" viewBox="0 0 20 20" strokeWidth="1.200"><g transform="translate(1 0) scale(.85)">{box}</g>{miniGrid(1, 1, "#333", "#aaa")}<path d="M4 9C2 9 3.500 13 1 13.500 3.500 14 2 18 4 18M16 4c2 0 .8 6 3 7-2.200 1-1 7-3 7" fill="none" stroke="#444" /></svg>
      </button>
      <button aria-label="Variable table" className={`${tab} -mt-px`}>
        <svg width="20" height="20" viewBox="0 0 20 20" strokeLinecap="round"><g transform="translate(1 2)">{variable}</g>{miniGrid(1, 1, "#333", "#aaa")}</svg>
      </button>
      <button aria-label="Connected app" className={`${tab} mt-[10px]`}>
        <span className="flex size-[22px] items-center justify-center rounded-[3px] bg-white">
          <svg width="20" height="20" viewBox="0 0 20 20" fill="none"><circle cx="10" cy="10" r="9" stroke="#e2e2e2" /><path d="M15 6.500H9.500a3.500 3.500 0 0 0 0 7H15" stroke="#27429c" strokeWidth="2.600" /></svg>
        </span>
      </button>
    </div>
  );
}

function Canvas() {
  return (
    <main className="relative min-w-0 flex-1 bg-white">
      <Rod />
      <ThreadDialog />
      <button aria-label="Toggle feature list" className="absolute top-[436px] -left-px flex h-[34px] w-[33px] items-center justify-center border border-l-0 border-[#aaa] bg-white">
        <svg width="18" height="18" viewBox="0 0 18 18" stroke="#333" fill="none"><path d="M8 1.500h10M5 6.500h13M5 11.500h13M5 16.500h13" strokeWidth="1.200" /><path d="M.5.500L3 3.500 5.500.500" strokeWidth="1.500" /><path d="M3 5v13" stroke="#999" strokeWidth="2" /></svg>
      </button>
      <ViewCube />
      <button aria-label="View options" className="absolute top-[145px] right-5 flex items-center gap-2">
        <Glyph size={19}><path d="M9 .8l8 2.700v10.500L9 17.300 1 14V3.500z" fill="#aaa" /><path d="M1 3.500l8 3 8-3L9 .8z" fill="#eee" /><path d="M9 6.500v10.800l8-3.300V3.500z" fill="#d8d8d8" /></Glyph>
        <Caret />
      </button>
      <SideTabs />
    </main>
  );
}

function ConfigurationPanel() {
  const cell = "h-[34px] border border-[#aaa] bg-[#f5f5f5] px-[6px] text-left";
  const head = "h-[34px] border border-[#aaa] bg-[#eaeaea] font-bold text-[#333]";
  return (
    <aside className="w-[528px] shrink-0 overflow-hidden border-l border-[#cfcfcf] bg-white pl-[5px] text-sm text-[#444]">
      <div role="tablist" className="flex h-[30px]">
        <button role="tab" aria-selected="true" className="w-[337px] shrink-0 border-b-2 border-[#2456b4] pt-[6px] font-medium text-[#2456b4]">Configurations</button>
        <button role="tab" aria-selected="false" className="flex-1 border-b border-[#cfcfcf] pt-[6px] pl-[124px] text-left whitespace-nowrap">Configured</button>
      </div>
      <div className="mt-[2px] flex h-[35px] items-center border border-r-0 border-[#aaa] bg-[#eaeaea] pl-[5px] text-[15px] font-medium">
        <button className="flex items-center gap-[3px] text-[#666]"><Chevron />Configuration</button>
        <span className="ml-[6px] text-[#999]">Default: THRHT-16X300</span>
      </div>
      <table className="-mt-px w-[421px] table-fixed border-collapse">
        <thead>
          <tr className="text-[15px]"><th rowSpan={2} scope="col" className={`${head} pb-[7px] align-bottom`}>Name</th><th scope="col" className={head}>Sketch 1</th><th scope="col" className={head}>Extrude 1</th></tr>
          <tr className="text-[15px]"><th scope="col" className={head}>Diameter 1</th><th scope="col" className={head}>Depth</th></tr>
        </thead>
        <tbody>
          <tr><td className={cell}>THRHT-10X100</td><td className={cell}>10 mm</td><td className={cell}>100 mm</td></tr>
          <tr><td className={cell}>THRHT-16X200</td><td className={cell}>16 mm</td><td className={cell}>200 mm</td></tr>
          <tr className="font-medium">
            <td className="h-[34px] border border-[#aaa] bg-[#f5f5f5] px-[6px] text-[#2456b4] shadow-[inset_4px_0_0_#2456b4]">THRHT-16X300</td>
            <td className={cell}>16 mm</td><td className={cell}>300 mm</td>
          </tr>
          <tr><td className={cell}><input aria-label="New configuration name" placeholder="Name" className="w-full italic placeholder:text-[#757575]" /></td></tr>
        </tbody>
      </table>
    </aside>
  );
}

export default function App() {
  return (
    <div className="flex h-screen flex-col overflow-hidden bg-[#fafafa] font-[Roboto,sans-serif]">
      <Header />
      <div className="ml-px flex min-h-0 flex-1 flex-col border-l border-[#cfcfcf] bg-white">
        <Toolbar />
        <div className="flex min-h-0 flex-1">
          <FeaturePanel />
          <Canvas />
          <ConfigurationPanel />
        </div>
      </div>
    </div>
  );
}
